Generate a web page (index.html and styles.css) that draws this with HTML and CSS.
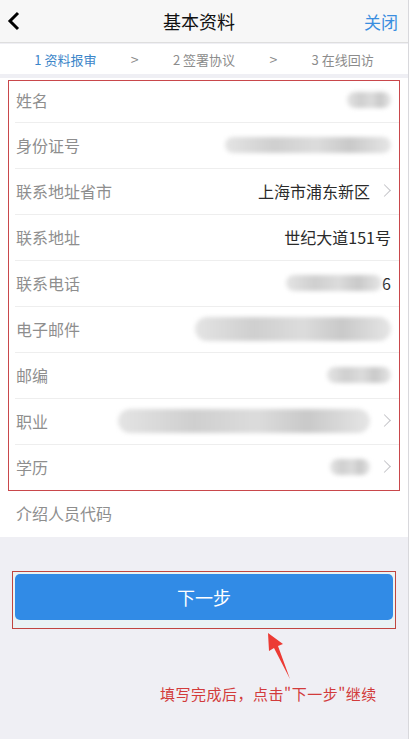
FILE: index.html
```html
<!DOCTYPE html>
<html lang="zh-CN">

<head>
    <meta charset="UTF-8">
    <meta name="viewport" content="width=device-width, initial-scale=1.0">
    <title>基本资料</title>
    <link rel="stylesheet" href="styles.css">
</head>

<body>
    <header class="navbar">
        <div class="nav-back">
            <svg width="14" height="20" viewBox="0 0 14 20">
                <polyline points="11,2 3,10 11,18" fill="none" stroke="#000" stroke-width="3" />
            </svg>
        </div>
        <div class="nav-title">基本资料</div>
        <div class="nav-close">关闭</div>
    </header>

    <div class="steps">
        <span class="step active">1 资料报审</span>
        <span class="step-arrow">&gt;</span>
        <span class="step">2 签署协议</span>
        <span class="step-arrow">&gt;</span>
        <span class="step">3 在线回访</span>
    </div>

    <div class="list">
        <div class="mark">
            <div class="row">
                <span class="label">姓名</span>
                <span class="value"><i class="blur" style="width:44px"></i></span>
            </div>
            <div class="row">
                <span class="label">身份证号</span>
                <span class="value"><i class="blur" style="width:166px"></i></span>
            </div>
            <div class="row">
                <span class="label">联系地址省市</span>
                <span class="value">上海市浦东新区</span>
                <span class="chev"></span>
            </div>
            <div class="row">
                <span class="label">联系地址</span>
                <span class="value">世纪大道151号</span>
            </div>
            <div class="row">
                <span class="label">联系电话</span>
                <span class="value"><i class="blur" style="width:96px"></i>6</span>
            </div>
            <div class="row">
                <span class="label">电子邮件</span>
                <span class="value"><i class="blur tall" style="width:196px"></i></span>
            </div>
            <div class="row">
                <span class="label">邮编</span>
                <span class="value"><i class="blur" style="width:64px"></i></span>
            </div>
            <div class="row">
                <span class="label">职业</span>
                <span class="value"><i class="blur tall" style="width:252px"></i></span>
                <span class="chev"></span>
            </div>
            <div class="row">
                <span class="label">学历</span>
                <span class="value"><i class="blur" style="width:40px"></i></span>
                <span class="chev"></span>
            </div>
        </div>
        <div class="row last">
            <span class="label">介绍人员代码</span>
        </div>
    </div>

    <div class="action">
        <div class="btn-mark">
            <button class="btn-next">下一步</button>
        </div>
    </div>

    <div class="note">
        <svg class="note-arrow" width="45" height="56" viewBox="0 0 45 56">
            <polygon points="13,7 28,18 23,20 35,53 19,22 14,25" fill="#ec3b34" />
        </svg>
        <div class="note-text">填写完成后，点击"下一步"继续</div>
    </div>
</body>

</html>
```

FILE: styles.css
```css
html,
body {
    margin: 0;
    height: 100%;
}

body {
    background: #efeff4;
    font-family: "Noto Sans CJK SC", "Noto Sans", sans-serif;
    color: #333;
    border-right: 1px solid #d8d8dc;
    box-sizing: border-box;
}

.navbar {
    display: flex;
    align-items: center;
    height: 42px;
    background: #f7f7f7;
    border-bottom: 1px solid #dedede;
}

.nav-back {
    width: 60px;
    padding-left: 7px;
    display: flex;
    align-items: center;
}

.nav-title {
    flex: 1;
    text-align: center;
    font-size: 18px;
    color: #111;
    padding-right: 7px;
}

.nav-close {
    width: 60px;
    text-align: right;
    padding-right: 10px;
    font-size: 17px;
    color: #3a8ee0;
}

.steps {
    display: grid;
    grid-template-columns: 1fr auto 1fr auto 1fr;
    align-items: center;
    height: 30px;
    margin-top: 1px;
    background: #fff;
    font-size: 13px;
    color: #8c8c8c;
    border-bottom: 4px solid #efeff4;
}

.step {
    text-align: center;
}

.step.active {
    color: #3c86c9;
}

.step-arrow {
    font-size: 14px;
    color: #888;
}

.list {
    background: #fff;
    padding-top: 2px;
}

.mark {
    margin: 0 8px;
    border: 1px solid #c9474b;
}

.row {
    box-sizing: border-box;
    display: flex;
    align-items: center;
    height: 46px;
    padding: 0 8px 2px 1px;
    margin-left: 6px;
    border-top: 1px solid #eeeeee;
}

.row:first-child {
    border-top: 0;
    height: 41px;
    padding-bottom: 4px;
}

.row.last {
    margin-left: 15px;
    border-top: 0;
}

.label {
    font-size: 16px;
    color: #8e8e8e;
}

.value {
    flex: 1;
    display: flex;
    align-items: center;
    justify-content: flex-end;
    font-size: 16px;
    color: #2b2b2b;
}

.blur {
    display: block;
    height: 16px;
    border-radius: 8px;
    background: linear-gradient(90deg, #e4e4e4, #cfcfcf 30%, #dcdcdc 55%, #c9c9c9 75%, #e6e6e6);
    filter: blur(2px);
}

.blur.tall {
    height: 24px;
    border-radius: 12px;
}

.chev {
    width: 8px;
    height: 8px;
    margin: 0 2px 0 10px;
    border-top: 1.5px solid #c4c4c8;
    border-right: 1.5px solid #c4c4c8;
    transform: rotate(45deg);
}

.action {
    padding: 34px 12px 0;
}

.btn-mark {
    border: 1px solid #c0463f;
    padding: 2px 2px 8px;
    background: #e9f3f4;
}

.btn-next {
    display: block;
    width: 100%;
    height: 46px;
    border: 0;
    border-radius: 5px;
    background: #318be6;
    color: #fff;
    font-family: inherit;
    font-size: 18px;
}

.note {
    display: flex;
    flex-direction: column;
}

.note-arrow {
    margin: -3px 0 0 255px;
}

.note-text {
    padding-left: 160px;
    margin-top: 1px;
    font-size: 15px;
    letter-spacing: 0.5px;
    color: #d23b3b;
}
```
